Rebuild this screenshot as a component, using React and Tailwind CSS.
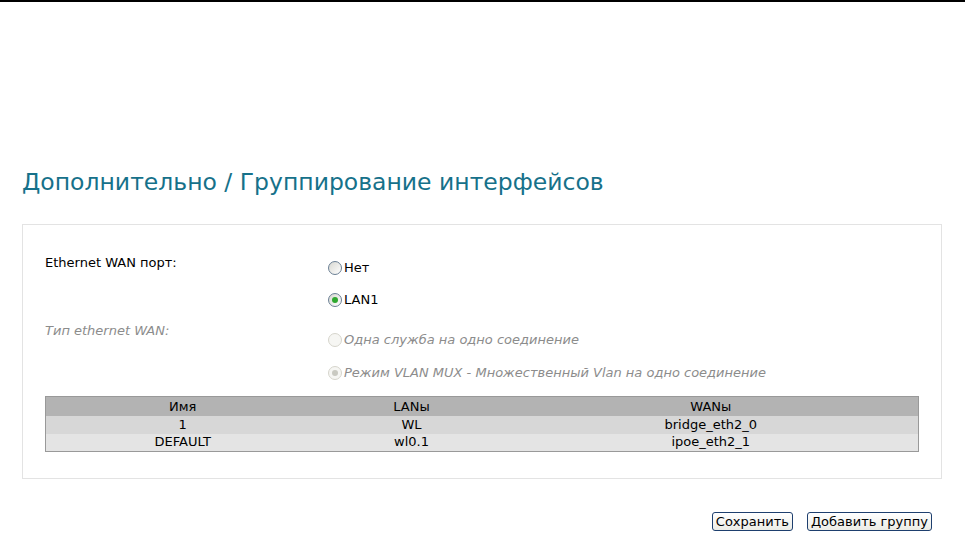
import React from 'react'

const Radio = ({ checked, disabled }) => (
  <span
    className={
      'inline-flex items-center justify-center w-[14px] h-[14px] rounded-full border mr-[2px] shrink-0 ' +
      (disabled
        ? 'border-[#d6d5cc] bg-[#f6f6f3]'
        : 'border-[#6b7f94] bg-gradient-to-br from-[#d8d8d2] to-white')
    }
  >
    {checked && (
      <span
        className={
          'w-[6px] h-[6px] rounded-full ' + (disabled ? 'bg-[#c9c9c1]' : 'bg-[#2fa82f]')
        }
      />
    )}
  </span>
)

const rows = [
  { name: '1', lans: 'WL', wans: 'bridge_eth2_0' },
  { name: 'DEFAULT', lans: 'wl0.1', wans: 'ipoe_eth2_1' },
]

const App = () => {
  return (
    <div
      className="w-[965px] h-[556px] bg-white border-t-2 border-black overflow-hidden"
      style={{ fontFamily: '"DejaVu Sans", Verdana, sans-serif' }}
    >
      <h1 className="mt-[165px] h-[57px] ml-[22px] text-[23.5px] leading-[30px] text-[#16718a] font-normal">
        Дополнительно / Группирование интерфейсов
      </h1>

      <div className="ml-[22px] w-[920px] h-[255px] border border-[#e3e3e3] pt-[30px] px-[22px] text-[13px] text-black">
        <div className="flex">
          <div className="w-[283px] leading-[16px]">Ethernet WAN порт:</div>
          <div className="flex flex-col gap-[16px] pt-[5px]">
            <label className="flex items-center leading-[16px]">
              <Radio />Нет
            </label>
            <label className="flex items-center leading-[16px]">
              <Radio checked />LAN1
            </label>
          </div>
        </div>

        <div className="flex mt-[15px] text-[#8c8c8c] italic">
          <div className="w-[283px] leading-[16px]">Тип ethernet WAN:</div>
          <div className="flex flex-col gap-[17px] pt-[9px]">
            <label className="flex items-center leading-[16px]">
              <Radio disabled />Одна служба на одно соединение
            </label>
            <label className="flex items-center leading-[16px]">
              <Radio checked disabled />Режим VLAN MUX - Множественный Vlan на одно соединение
            </label>
          </div>
        </div>

        <table className="mt-[15px] w-[874px] border border-[#999] border-collapse text-center">
          <thead>
            <tr className="bg-[#b3b3b3] h-[19px] leading-[17px]">
              <th className="w-[274px] p-0 font-normal">Имя</th>
              <th className="w-[184px] p-0 font-normal">LANы</th>
              <th className="p-0 font-normal">WANы</th>
            </tr>
          </thead>
          <tbody>
            {rows.map((r, i) => (
              <tr
                key={i}
                className={'h-[18px] leading-[16px] ' + (i % 2 === 0 ? 'bg-[#d7d7d7]' : 'bg-[#e4e4e4]')}
              >
                <td className="p-0">{r.name}</td>
                <td className="p-0">{r.lans}</td>
                <td className="p-0">{r.wans}</td>
              </tr>
            ))}
          </tbody>
        </table>
      </div>

      <div className="flex justify-end gap-[14px] mr-[33px] mt-[33px]">
        <button className="h-[19px] px-[3px] rounded-[3px] border border-[#1e3f6e] bg-gradient-to-b from-white to-[#ecece6] text-[13px] leading-[15px] text-black">
          Сохранить
        </button>
        <button className="h-[19px] px-[3px] rounded-[3px] border border-[#1e3f6e] bg-gradient-to-b from-white to-[#ecece6] text-[13px] leading-[15px] text-black">
          Добавить группу
        </button>
      </div>
    </div>
  )
}

export default App
